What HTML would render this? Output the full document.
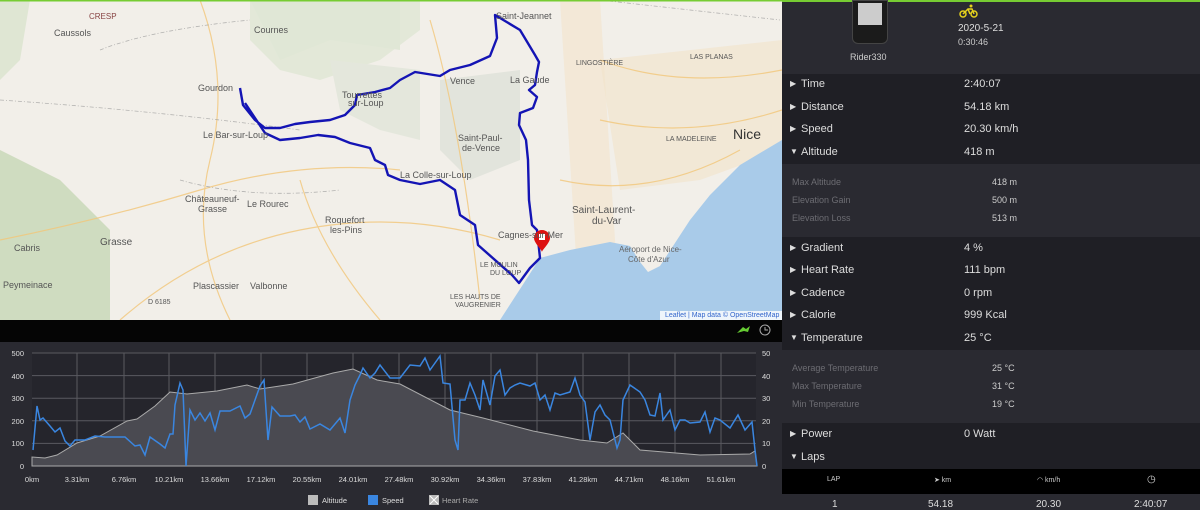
<!DOCTYPE html>
<html><head><meta charset="utf-8"><style>
*{margin:0;padding:0;box-sizing:border-box}
body{width:1200px;height:509px;overflow:hidden;background:#2a2a31;font-family:"Liberation Sans",sans-serif;position:relative}
.map{position:absolute;left:0;top:0;width:782px;height:320px;background:#f1eee8;overflow:hidden}
.ml{position:absolute;font-size:9px;color:#555;white-space:nowrap}
.panel{position:absolute;left:782px;top:0;width:418px;height:509px;background:#1f1f25}
.row{position:absolute;left:0;width:418px;font-size:11px;color:#ddd}
.row .l{position:absolute;left:19px}
.row .v{position:absolute;left:182px}
.row .a{position:absolute;left:8px;font-size:8px;top:1px}
.sub{position:absolute;left:0;width:418px;font-size:9px;color:#6c6c72}
.sub .v{position:absolute;left:210px;color:#ccc}
.sub .l{position:absolute;left:10px}
</style></head><body>
<div class="map">
<svg width="782" height="320" style="position:absolute;left:0;top:0">
<rect width="782" height="320" fill="#f2efe9"/>
<path d="M250 0 L420 0 L420 30 L380 60 L320 80 L280 70 L250 40Z" fill="#dfe6d3" opacity=".8"/>
<path d="M0 150 L60 180 L110 230 L110 320 L0 320Z" fill="#cfdcc0"/>
<path d="M0 0 L30 0 L20 60 L0 80Z" fill="#dfe6d3"/>
<path d="M250 0 L400 0 L400 50 L330 40 L280 60Z" fill="#e0e7d6"/>
<path d="M330 60 L420 70 L420 140 L380 130 L340 110Z" fill="#e4e7dc"/>
<path d="M440 80 L520 70 L520 160 L470 180 L440 150Z" fill="#e2e4dc"/>
<path d="M560 0 L600 0 L620 320 L580 320Z" fill="#f3e6cf" opacity=".7"/>
<path d="M600 60 L782 40 L782 150 L700 180 L620 190Z" fill="#f1e3c9" opacity=".6"/>
<path d="M500 320 L522 286 L540 258 L570 250 L610 242 L630 246 L640 262 L648 272 L660 266 L690 220 L710 195 L740 165 L782 140 L782 320Z" fill="#a9cbe9"/>
<g fill="none" stroke="#f2c77a" stroke-width="1.2" opacity=".8">
<path d="M0 240 Q100 220 200 190 T400 170"/><path d="M120 320 Q200 250 300 230 T500 240"/>
<path d="M200 0 Q230 80 210 160 T230 320"/><path d="M600 60 Q680 90 782 70"/><path d="M600 120 Q690 140 782 110"/>
<path d="M560 180 Q650 200 740 150"/><path d="M430 20 Q460 120 480 300"/><path d="M300 180 Q320 250 380 320"/>
</g>
<g fill="none" stroke="#999" stroke-width=".8" stroke-dasharray="4 2 1 2" opacity=".7">
<path d="M0 100 Q150 110 300 130"/><path d="M100 50 Q150 30 250 20"/><path d="M180 180 Q250 200 340 190"/><path d="M600 0 L780 20"/>
</g>
<g fill="none" stroke="#1414b4" stroke-width="2.4" stroke-linejoin="round">
<path d="M240 88 L243 105 L255 120 L265 128 L280 128 L295 124 L310 122 L330 120 L345 115 L355 105 L357 95 L375 92 L390 88 L400 80 L415 72 L440 76 L450 70 L470 65 L490 56 L497 38 L495 15 L520 30 L535 55 L539 62 L537 72 L535 85 L529 90 L537 97 L533 108 L520 113 L519 125 L526 140 L528 160 L529 200 L532 225 L537 230 L540 258 L530 268 L519 283 L512 275 L478 245 L475 225 L460 215 L455 190 L440 180 L420 184 L400 180 L388 175 L385 165 L375 160 L370 148 L350 143 L335 137 L318 135 L300 138 L280 140 L265 133 L255 118 L245 103"/>
</g>
<path d="M542 230 c-5 0 -8 4 -8 8 c0 5 8 12 8 14 c0 -2 8 -9 8 -14 c0 -4 -3 -8 -8 -8z" fill="#d11"/>
<rect x="539" y="234" width="6" height="6" fill="#fff"/>
<rect x="660" y="311" width="122" height="9" fill="#fff" opacity=".8"/>
<rect x="0" y="0" width="782" height="1.5" fill="#7c3"/>
</svg>
<div class="ml" style="left:54px;top:28px">Caussols</div>
<div class="ml" style="left:89px;top:12px;font-size:8px;color:#844">CRESP</div>
<div class="ml" style="left:254px;top:25px">Cournes</div>
<div class="ml" style="left:198px;top:83px">Gourdon</div>
<div class="ml" style="left:342px;top:90px">Tourrettes</div><div class="ml" style="left:348px;top:98px">sur-Loup</div>
<div class="ml" style="left:203px;top:130px">Le Bar-sur-Loup</div>
<div class="ml" style="left:185px;top:194px">Châteauneuf-</div><div class="ml" style="left:198px;top:204px">Grasse</div>
<div class="ml" style="left:247px;top:199px">Le Rourec</div>
<div class="ml" style="left:325px;top:215px">Roquefort</div><div class="ml" style="left:330px;top:225px">les-Pins</div>
<div class="ml" style="left:100px;top:237px;font-size:10px">Grasse</div>
<div class="ml" style="left:14px;top:243px">Cabris</div>
<div class="ml" style="left:3px;top:280px">Peymeinace</div>
<div class="ml" style="left:193px;top:281px">Plascassier</div>
<div class="ml" style="left:250px;top:281px">Valbonne</div>
<div class="ml" style="left:148px;top:299px;font-size:7px">D 6185</div>
<div class="ml" style="left:450px;top:76px">Vence</div>
<div class="ml" style="left:510px;top:75px">La Gaude</div>
<div class="ml" style="left:496px;top:11px">Saint-Jeannet</div>
<div class="ml" style="left:458px;top:133px">Saint-Paul-</div><div class="ml" style="left:462px;top:143px">de-Vence</div>
<div class="ml" style="left:400px;top:170px">La Colle-sur-Loup</div>
<div class="ml" style="left:498px;top:230px">Cagnes-sur-Mer</div>
<div class="ml" style="left:572px;top:205px;font-size:10px">Saint-Laurent-</div><div class="ml" style="left:592px;top:216px;font-size:10px">du-Var</div>
<div class="ml" style="left:619px;top:245px;font-size:8px;color:#666">Aéroport de Nice-</div><div class="ml" style="left:628px;top:255px;font-size:8px;color:#666">Côte d'Azur</div>
<div class="ml" style="left:733px;top:126px;font-size:14px;color:#333">Nice</div>
<div class="ml" style="left:576px;top:60px;font-size:7px">LINGOSTIÈRE</div>
<div class="ml" style="left:690px;top:54px;font-size:7px">LAS PLANAS</div>
<div class="ml" style="left:666px;top:136px;font-size:7px">LA MADELEINE</div>
<div class="ml" style="left:480px;top:262px;font-size:7px">LE MOULIN</div><div class="ml" style="left:490px;top:270px;font-size:7px">DU LOUP</div>
<div class="ml" style="left:450px;top:294px;font-size:7px">LES HAUTS DE</div><div class="ml" style="left:455px;top:302px;font-size:7px">VAUGRENIER</div>
<div class="ml" style="left:665px;top:312px;font-size:7px;color:#36c">Leaflet | Map data © OpenStreetMap</div>
</div>
<div style="position:absolute;left:0;top:320px;width:782px;height:22px;background:#050505"></div>
<svg style="position:absolute;left:0;top:320px" width="782" height="22"><path d="M737 13 l6 -6 l3 2 l4 -3 l-2 6 l-4 -1z" fill="#6c3"/><circle cx="765" cy="10" r="5" fill="none" stroke="#aaa"/><path d="M765 7 v3 h3" stroke="#aaa" fill="none"/></svg>
<svg style="position:absolute;left:0;top:342px" width="782" height="167" font-family="Liberation Sans" font-size="7.5" fill="#ddd">
<rect x="32" y="11" width="724" height="113" fill="#25252c"/>
<g stroke="#5a5a60" stroke-width="1"><line x1="32" y1="11" x2="756" y2="11"/><line x1="32" y1="33.6" x2="756" y2="33.6"/><line x1="32" y1="56.2" x2="756" y2="56.2"/><line x1="32" y1="78.8" x2="756" y2="78.8"/><line x1="32" y1="101.4" x2="756" y2="101.4"/>
<path d="M77 11V124M124 11V124M169 11V124M215 11V124M261 11V124M307 11V124M353 11V124M399 11V124M445 11V124M491 11V124M537 11V124M583 11V124M629 11V124M675 11V124M721 11V124"/></g>
<path d="M32 124 L32 115 L45 116 L57 113 L77 101 L100 94 L127 79 L137 77 L155 64 L170 50 L187 52 L217 49 L247 43 L260 47 L293 42 L333 31 L353 27 L377 38 L400 42 L450 68 L483 76 L533 89 L580 98 L607 101 L623 91 L640 108 L700 113 L750 112 L755 109 L757 124Z" fill="#4a4a51" stroke="#aaa" stroke-width="1"/>
<polyline fill="none" stroke="#3a86e0" stroke-width="1.5" points="33,108 37,64 40,78 43,76 50,84 55,90 60,86 65,99 70,104 75,98 85,98 95,94 105,95 115,95 125,95 135,104 140,103 145,113 150,95 160,102 165,106 170,92 173,92 175,63 180,41 183,48 186,124 190,68 195,78 200,71 205,79 210,71 215,88 220,69 230,69 240,64 245,76 250,72 255,58 260,44 264,38 268,98 272,65 280,74 290,74 295,73 300,80 305,75 310,87 320,82 330,88 340,76 345,91 350,58 355,43 360,33 363,26 370,36 375,31 380,23 390,36 400,36 410,23 420,24 425,16 430,28 440,14 443,41 450,42 455,98 458,108 460,58 465,58 470,41 475,53 480,68 483,38 490,63 495,34 500,28 505,53 510,46 515,43 520,41 530,44 535,41 540,58 545,53 550,68 555,51 560,53 570,50 575,36 580,53 585,60 590,98 595,70 600,63 605,73 610,78 615,98 617,106 620,98 623,58 630,43 640,50 645,58 650,73 655,74 660,51 663,78 670,68 675,88 680,78 685,78 690,81 700,80 705,70 710,90 715,76 720,78 730,86 738,73 745,88 752,80 755,108 757,124"/>
<g text-anchor="end"><text x="24" y="14">500</text><text x="24" y="37">400</text><text x="24" y="59">300</text><text x="24" y="82">200</text><text x="24" y="104">100</text><text x="24" y="127">0</text></g>
<g><text x="762" y="14">50</text><text x="762" y="37">40</text><text x="762" y="59">30</text><text x="762" y="82">20</text><text x="762" y="104">10</text><text x="762" y="127">0</text></g>
<g text-anchor="middle"><text x="32" y="140">0km</text><text x="77" y="140">3.31km</text><text x="124" y="140">6.76km</text><text x="169" y="140">10.21km</text><text x="215" y="140">13.66km</text><text x="261" y="140">17.12km</text><text x="307" y="140">20.55km</text><text x="353" y="140">24.01km</text><text x="399" y="140">27.48km</text><text x="445" y="140">30.92km</text><text x="491" y="140">34.36km</text><text x="537" y="140">37.83km</text><text x="583" y="140">41.28km</text><text x="629" y="140">44.71km</text><text x="675" y="140">48.16km</text><text x="721" y="140">51.61km</text></g>
<rect x="308" y="153" width="10" height="10" fill="#bbb"/><text x="322" y="161">Altitude</text>
<rect x="368" y="153" width="10" height="10" fill="#3a86e0"/><text x="382" y="161">Speed</text>
<rect x="429" y="153" width="10" height="10" fill="#bbb"/><path d="M430 154l8 8M438 154l-8 8" stroke="#fff"/><text x="442" y="161" fill="#aaa">Heart Rate</text>
</svg>
<div class="panel">
<div style="position:absolute;left:0;top:0;width:418px;height:74px;background:#2a2a31"></div>
<div style="position:absolute;left:0;top:0;width:418px;height:1.5px;background:#7c3"></div>
<div style="position:absolute;left:70px;top:0;width:36px;height:44px;background:#1b1b1b;border-radius:0 0 6px 6px;border:1px solid #444"><div style="margin:2px 5px;height:22px;background:#ccc"></div></div>
<div style="position:absolute;left:68px;top:52px;font-size:9px;color:#ccc">Rider330</div>
<svg style="position:absolute;left:177px;top:4px" width="20" height="14"><circle cx="4" cy="10" r="3" fill="none" stroke="#e6d21d" stroke-width="1.5"/><circle cx="15" cy="10" r="3" fill="none" stroke="#e6d21d" stroke-width="1.5"/><path d="M4 10 L9 5 L13 5 L15 10 M9 5 L11 10" stroke="#e6d21d" stroke-width="1.5" fill="none"/><circle cx="12" cy="2" r="1.5" fill="#e6d21d"/></svg>
<div style="position:absolute;left:176px;top:23px;font-size:10px;color:#ddd">2020-5-21</div>
<div style="position:absolute;left:176px;top:37px;font-size:9px;color:#ccc">0:30:46</div>
<div style="position:absolute;left:0;top:164px;width:418px;height:73px;background:#2a2a31"></div>
<div style="position:absolute;left:0;top:350px;width:418px;height:73px;background:#2a2a31"></div>
<div style="position:absolute;left:0;top:469px;width:418px;height:25px;background:#000"></div>
<div style="position:absolute;left:0;top:494px;width:418px;height:15px;background:#2a2a31"></div>
<div class="row" style="top:78px"><span class="a">▶</span><span class="l">Time</span><span class="v">2:40:07</span></div>
<div class="row" style="top:101px"><span class="a">▶</span><span class="l">Distance</span><span class="v">54.18 km</span></div>
<div class="row" style="top:123px"><span class="a">▶</span><span class="l">Speed</span><span class="v">20.30 km/h</span></div>
<div class="row" style="top:146px"><span class="a">▼</span><span class="l">Altitude</span><span class="v">418 m</span></div>
<div class="sub" style="top:177px"><span class="l">Max Altitude</span><span class="v">418 m</span></div>
<div class="sub" style="top:195px"><span class="l">Elevation Gain</span><span class="v">500 m</span></div>
<div class="sub" style="top:213px"><span class="l">Elevation Loss</span><span class="v">513 m</span></div>
<div class="row" style="top:242px"><span class="a">▶</span><span class="l">Gradient</span><span class="v">4 %</span></div>
<div class="row" style="top:264px"><span class="a">▶</span><span class="l">Heart Rate</span><span class="v">111 bpm</span></div>
<div class="row" style="top:287px"><span class="a">▶</span><span class="l">Cadence</span><span class="v">0 rpm</span></div>
<div class="row" style="top:309px"><span class="a">▶</span><span class="l">Calorie</span><span class="v">999 Kcal</span></div>
<div class="row" style="top:332px"><span class="a">▼</span><span class="l">Temperature</span><span class="v">25 °C</span></div>
<div class="sub" style="top:363px"><span class="l">Average Temperature</span><span class="v">25 °C</span></div>
<div class="sub" style="top:381px"><span class="l">Max Temperature</span><span class="v">31 °C</span></div>
<div class="sub" style="top:399px"><span class="l">Min Temperature</span><span class="v">19 °C</span></div>
<div class="row" style="top:428px"><span class="a">▶</span><span class="l">Power</span><span class="v">0 Watt</span></div>
<div class="row" style="top:451px"><span class="a">▼</span><span class="l">Laps</span></div>
<div style="position:absolute;top:476px;left:45px;font-size:7px;color:#ccc">LAP</div>
<div style="position:absolute;top:476px;left:152px;font-size:7px;color:#ccc">➤ km</div>
<div style="position:absolute;top:476px;left:255px;font-size:7px;color:#ccc">◠ km/h</div>
<div style="position:absolute;top:474px;left:365px;font-size:10px;color:#ccc">◷</div>
<div style="position:absolute;top:499px;left:50px;font-size:10px;color:#ddd">1</div>
<div style="position:absolute;top:499px;left:146px;font-size:10px;color:#ddd">54.18</div>
<div style="position:absolute;top:499px;left:254px;font-size:10px;color:#ddd">20.30</div>
<div style="position:absolute;top:499px;left:352px;font-size:10px;color:#ddd">2:40:07</div>
</div>
</body></html>
